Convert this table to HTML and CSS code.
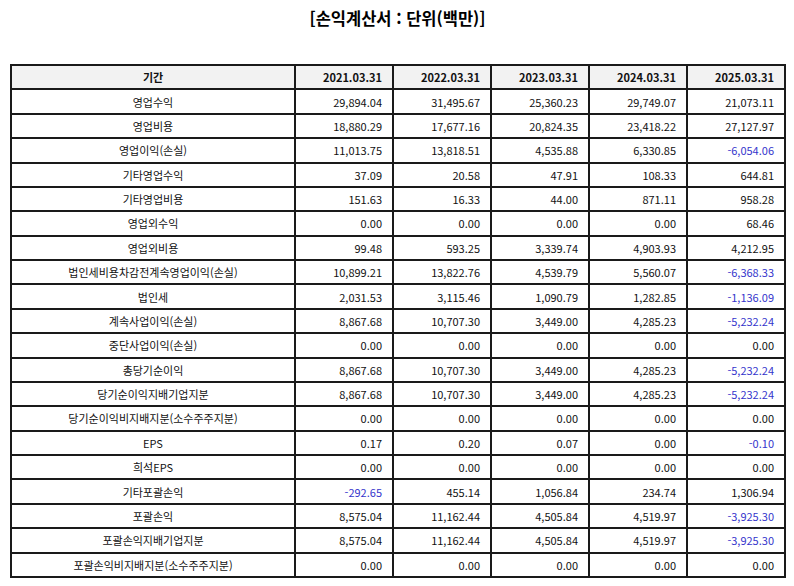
FILE: index.html
```html
<!DOCTYPE html>
<html lang="ko">
<head>
<meta charset="utf-8">
<title>손익계산서</title>
<link rel="stylesheet" href="styles.css">
</head>
<body>
<div class="page">
  <h1 class="title">[손익계산서 : 단위(백만)]</h1>
  <table class="fin">
    <colgroup>
      <col class="c-label"><col class="c-num"><col class="c-num"><col class="c-num"><col class="c-num"><col class="c-num">
    </colgroup>
    <thead>
      <tr><th class="lbl">기간</th><th>2021.03.31</th><th>2022.03.31</th><th>2023.03.31</th><th>2024.03.31</th><th>2025.03.31</th></tr>
    </thead>
    <tbody>
      <tr><td class="lbl">영업수익</td><td>29,894.04</td><td>31,495.67</td><td>25,360.23</td><td>29,749.07</td><td>21,073.11</td></tr>
      <tr><td class="lbl">영업비용</td><td>18,880.29</td><td>17,677.16</td><td>20,824.35</td><td>23,418.22</td><td>27,127.97</td></tr>
      <tr><td class="lbl">영업이익(손실)</td><td>11,013.75</td><td>13,818.51</td><td>4,535.88</td><td>6,330.85</td><td class="neg">-6,054.06</td></tr>
      <tr><td class="lbl">기타영업수익</td><td>37.09</td><td>20.58</td><td>47.91</td><td>108.33</td><td>644.81</td></tr>
      <tr><td class="lbl">기타영업비용</td><td>151.63</td><td>16.33</td><td>44.00</td><td>871.11</td><td>958.28</td></tr>
      <tr><td class="lbl">영업외수익</td><td>0.00</td><td>0.00</td><td>0.00</td><td>0.00</td><td>68.46</td></tr>
      <tr><td class="lbl">영업외비용</td><td>99.48</td><td>593.25</td><td>3,339.74</td><td>4,903.93</td><td>4,212.95</td></tr>
      <tr><td class="lbl">법인세비용차감전계속영업이익(손실)</td><td>10,899.21</td><td>13,822.76</td><td>4,539.79</td><td>5,560.07</td><td class="neg">-6,368.33</td></tr>
      <tr><td class="lbl">법인세</td><td>2,031.53</td><td>3,115.46</td><td>1,090.79</td><td>1,282.85</td><td class="neg">-1,136.09</td></tr>
      <tr><td class="lbl">계속사업이익(손실)</td><td>8,867.68</td><td>10,707.30</td><td>3,449.00</td><td>4,285.23</td><td class="neg">-5,232.24</td></tr>
      <tr><td class="lbl">중단사업이익(손실)</td><td>0.00</td><td>0.00</td><td>0.00</td><td>0.00</td><td>0.00</td></tr>
      <tr><td class="lbl">총당기순이익</td><td>8,867.68</td><td>10,707.30</td><td>3,449.00</td><td>4,285.23</td><td class="neg">-5,232.24</td></tr>
      <tr><td class="lbl">당기순이익지배기업지분</td><td>8,867.68</td><td>10,707.30</td><td>3,449.00</td><td>4,285.23</td><td class="neg">-5,232.24</td></tr>
      <tr><td class="lbl">당기순이익비지배지분(소수주주지분)</td><td>0.00</td><td>0.00</td><td>0.00</td><td>0.00</td><td>0.00</td></tr>
      <tr><td class="lbl">EPS</td><td>0.17</td><td>0.20</td><td>0.07</td><td>0.00</td><td class="neg">-0.10</td></tr>
      <tr><td class="lbl">희석EPS</td><td>0.00</td><td>0.00</td><td>0.00</td><td>0.00</td><td>0.00</td></tr>
      <tr><td class="lbl">기타포괄손익</td><td class="neg">-292.65</td><td>455.14</td><td>1,056.84</td><td>234.74</td><td>1,306.94</td></tr>
      <tr><td class="lbl">포괄손익</td><td>8,575.04</td><td>11,162.44</td><td>4,505.84</td><td>4,519.97</td><td class="neg">-3,925.30</td></tr>
      <tr><td class="lbl">포괄손익지배기업지분</td><td>8,575.04</td><td>11,162.44</td><td>4,505.84</td><td>4,519.97</td><td class="neg">-3,925.30</td></tr>
      <tr><td class="lbl">포괄손익비지배지분(소수주주지분)</td><td>0.00</td><td>0.00</td><td>0.00</td><td>0.00</td><td>0.00</td></tr>
    </tbody>
  </table>
</div>
</body>
</html>
```

FILE: styles.css
```css
html, body {
  margin: 0;
  padding: 0;
  background: #ffffff;
}

.page {
  padding: 6px 9px 0 10px;
  font-family: "Noto Sans CJK KR", "Noto Sans", sans-serif;
  color: #111;
}

.title {
  margin: 0 0 34px 0;
  font-size: 16.5px;
  line-height: 24px;
  font-weight: 700;
  text-align: center;
  color: #000;
}

.fin {
  width: 775px;
  border-collapse: collapse;
  table-layout: fixed;
  font-size: 11px;
}

.c-label { width: 284px; }
.c-num { width: 98px; }

.fin th,
.fin td {
  border: 2px solid #1a1a1a;
  height: 22.38px;
  padding: 0 10px 0 4px;
  text-align: right;
  white-space: nowrap;
  line-height: 14px;
}

.fin th {
  background: #f2f2f2;
  font-weight: 700;
}

.fin .lbl {
  text-align: center;
  padding: 0 4px;
}

.fin .neg {
  color: #3535cc;
}
```
